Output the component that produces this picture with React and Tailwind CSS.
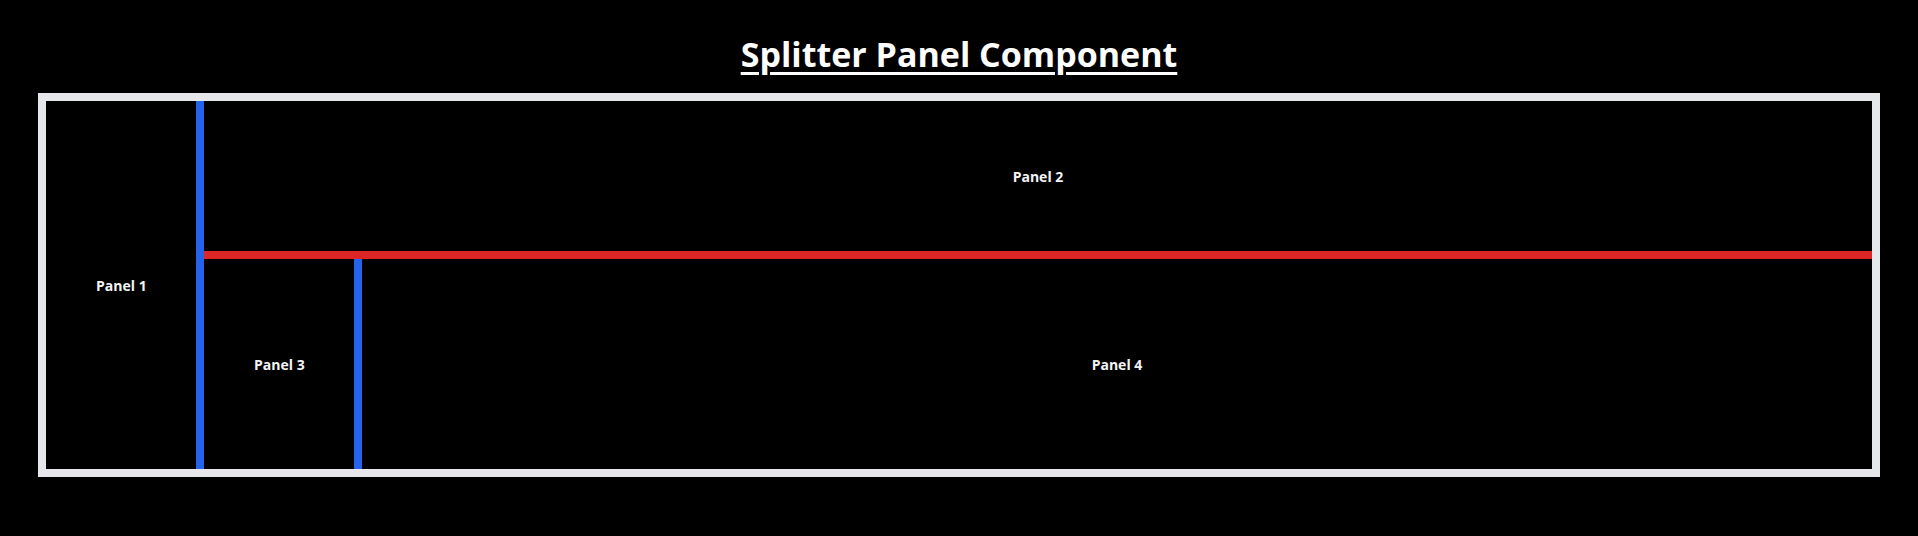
import React from 'react';

const Panel = ({ label, className = '' }) => (
  <div className={`flex items-center justify-center ${className}`}>
    <span className="text-[14px] font-bold text-[#f3f4f6]">{label}</span>
  </div>
);

export default function App() {
  return (
    <div
      className="min-h-screen bg-black pt-[34px]"
      style={{ fontFamily: '"Open Sans", "Noto Sans", sans-serif' }}
    >
      <h1 className="text-center text-[34px] leading-[40px] font-bold text-white underline decoration-[3px] underline-offset-[5px]">
        Splitter Panel Component
      </h1>

      {/* Splitter container */}
      <div className="mx-auto mt-[19px] flex h-[384px] w-[96%] border-8 border-[#e5e7eb]">
        <Panel label="Panel 1" className="w-[150px] shrink-0" />
        <div className="w-2 shrink-0 bg-[#2563eb]" />
        <div className="flex flex-1 flex-col">
          <Panel label="Panel 2" className="h-[150px] shrink-0" />
          <div className="h-2 shrink-0 bg-[#dc2626]" />
          <div className="flex flex-1">
            <Panel label="Panel 3" className="w-[150px] shrink-0" />
            <div className="w-2 shrink-0 bg-[#2563eb]" />
            <Panel label="Panel 4" className="flex-1" />
          </div>
        </div>
      </div>
    </div>
  );
}
